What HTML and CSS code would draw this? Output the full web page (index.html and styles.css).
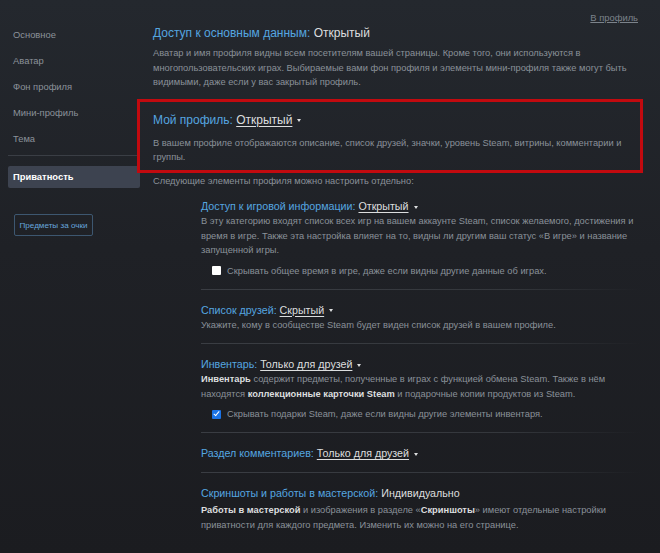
FILE: index.html
```html
<!DOCTYPE html>
<html>
<head>
    <title>Настройки приватности</title>
    <meta http-equiv="Content-Type" content="text/html; charset=utf-8" />
    <link rel="stylesheet" href="styles.css">
</head>
<body>
<div class="page">
    <!-- Левое меню -->
    <div class="side">
        <div class="side-item">Основное</div>
        <div class="side-item">Аватар</div>
        <div class="side-item">Фон профиля</div>
        <div class="side-item">Мини-профиль</div>
        <div class="side-item">Тема</div>
        <div class="side-line"></div>
        <div class="side-item side-active">Приватность</div>
        <div class="side-button">Предметы за очки</div>
    </div>

    <!-- Настройки -->
    <div class="main">
        <div class="top-row"><a class="back-link" href="#">В профиль</a></div>

        <div class="head-title"><span class="label">Доступ к основным данным:</span> <span class="value-plain">Открытый</span></div>
        <div class="text head-text">Аватар и имя профиля видны всем посетителям вашей страницы. Кроме того, они используются в многопользовательских играх. Выбираемые вами фон профиля и элементы мини-профиля также могут быть видимыми, даже если у вас закрытый профиль.</div>

        <div class="mark-box">
            <div class="head-title"><span class="label">Мой профиль:</span> <span class="value">Открытый</span><span class="arrow"></span></div>
            <div class="text box-text">В вашем профиле отображаются описание, список друзей, значки, уровень Steam, витрины, комментарии и группы.</div>
        </div>

        <div class="text next-text">Следующие элементы профиля можно настроить отдельно:</div>

        <div class="sub-list">
            <div class="sub first">
                <div class="sub-title"><span class="label">Доступ к игровой информации:</span> <span class="value">Открытый</span><span class="arrow"></span></div>
                <div class="text">В эту категорию входят список всех игр на вашем аккаунте Steam, список желаемого, достижения и время в игре. Также эта настройка влияет на то, видны ли другим ваш статус «В игре» и название запущенной игры.</div>
                <div class="check-row"><span class="check"></span>Скрывать общее время в игре, даже если видны другие данные об играх.</div>
            </div>
            <div class="sub">
                <div class="sub-title"><span class="label">Список друзей:</span> <span class="value">Скрытый</span><span class="arrow"></span></div>
                <div class="text">Укажите, кому в сообществе Steam будет виден список друзей в вашем профиле.</div>
            </div>
            <div class="sub">
                <div class="sub-title"><span class="label">Инвентарь:</span> <span class="value">Только для друзей</span><span class="arrow"></span></div>
                <div class="text"><b>Инвентарь</b> содержит предметы, полученные в играх с функцией обмена Steam. Также в нём находятся <b>коллекционные карточки Steam</b> и подарочные копии продуктов из Steam.</div>
                <div class="check-row"><span class="check checked"></span>Скрывать подарки Steam, даже если видны другие элементы инвентаря.</div>
            </div>
            <div class="sub">
                <div class="sub-title"><span class="label">Раздел комментариев:</span> <span class="value">Только для друзей</span><span class="arrow"></span></div>
            </div>
            <div class="sub last">
                <div class="sub-title"><span class="label">Скриншоты и работы в мастерской:</span> <span class="value-plain">Индивидуально</span></div>
                <div class="text"><b>Работы в мастерской</b> и изображения в разделе «<b>Скриншоты</b>» имеют отдельные настройки приватности для каждого предмета. Изменить их можно на его странице.</div>
            </div>
        </div>
    </div>
</div>
</body>
</html>
```

FILE: styles.css
```css
html, body {margin: 0; height: 100%; overflow: hidden;}
body{
    background: linear-gradient(180deg, #24282e 0%, #1f2126 45%, #1b1c20 100%);
    font-family: "Liberation Sans", Arial, sans-serif;
    color: #8f98a0;
}
.page{
    display: flex;
    align-items: flex-start;
}

/* левое меню */
.side{
    width: 132px;
    margin-left: 8px;
    padding-top: 22px;
    display: flex;
    flex-direction: column;
}
.side-item{
    font-size: 9.4px;
    line-height: 26px;
    padding-left: 5px;
    color: #8b929a;
}
.side-line{
    height: 1px;
    background: #3a3e45;
    margin: 3px 0 10px 0;
}
.side-active{
    background: #3d4350;
    color: #ffffff;
    font-weight: bold;
    line-height: 22px;
    border-radius: 2px;
}
.side-button{
    margin: 26px 0 0 6px;
    width: 77px;
    height: 20px;
    border: 1px solid #3d5770;
    border-radius: 2px;
    color: #67a6dc;
    font-size: 8.1px;
    display: flex;
    align-items: center;
    justify-content: center;
}

/* правая часть */
.main{
    width: 487px;
    margin-left: 13px;
    padding-top: 12px;
}
.top-row{
    display: flex;
    justify-content: flex-end;
    padding-right: 2px;
    line-height: 12px;
}
.back-link{
    font-size: 9.4px;
    color: #7c838b;
}
.head-title{
    font-size: 12px;
    line-height: 18px;
}
.label{
    color: #55a6e0;
}
.value-plain{
    color: #dcdedf;
}
.value{
    color: #dcdedf;
    text-decoration: underline;
    text-underline-offset: 2px;
}
.arrow{
    display: inline-block;
    width: 0;
    height: 0;
    margin-left: 5px;
    vertical-align: middle;
    border-left: 2.5px solid transparent;
    border-right: 2.5px solid transparent;
    border-top: 3px solid #dcdedf;
}
.text{
    font-size: 9.3px;
    line-height: 14.5px;
    color: #8a9199;
}
.text b{
    color: #dcdedf;
}
.head-text{
    margin-top: 4px;
}
.next-text{
    margin-top: 1px;
}

/* выделенный блок */
.mark-box{
    margin: 9px -3px 0 -16px;
    border: 3px solid #c20a0f;
    padding: 9px 0 5px 13px;
}
.box-text{
    margin-top: 7px;
}

.sub-list{
    padding-left: 48px;
}
.sub{
    padding: 12px 0 11px 0;
    border-top: 1px solid;
    border-image: linear-gradient(90deg, #3a3d43 0%, #34373c 70%, rgba(52, 55, 60, 0) 100%) 1;
}
.sub.first{
    border-top: none;
    padding-top: 10px;
}
.sub-title{
    font-size: 10.7px;
    line-height: 16px;
}
.sub.last .text{
    margin-top: 2px;
}
.check-row{
    display: flex;
    align-items: center;
    margin-top: 6px;
    padding-left: 11px;
    font-size: 9.3px;
    line-height: 14px;
    color: #8a9199;
}
.check{
    width: 9px;
    height: 9px;
    background: #ffffff;
    border-radius: 1px;
    margin-right: 6px;
    position: relative;
}
.check.checked{
    background: #1a73e8;
}
/* галочка */
.check.checked:after{
    content: "";
    position: absolute;
    left: 3px;
    top: 0px;
    width: 2px;
    height: 5px;
    border-right: 1.5px solid #fff;
    border-bottom: 1.5px solid #fff;
    transform: rotate(40deg);
}
```
